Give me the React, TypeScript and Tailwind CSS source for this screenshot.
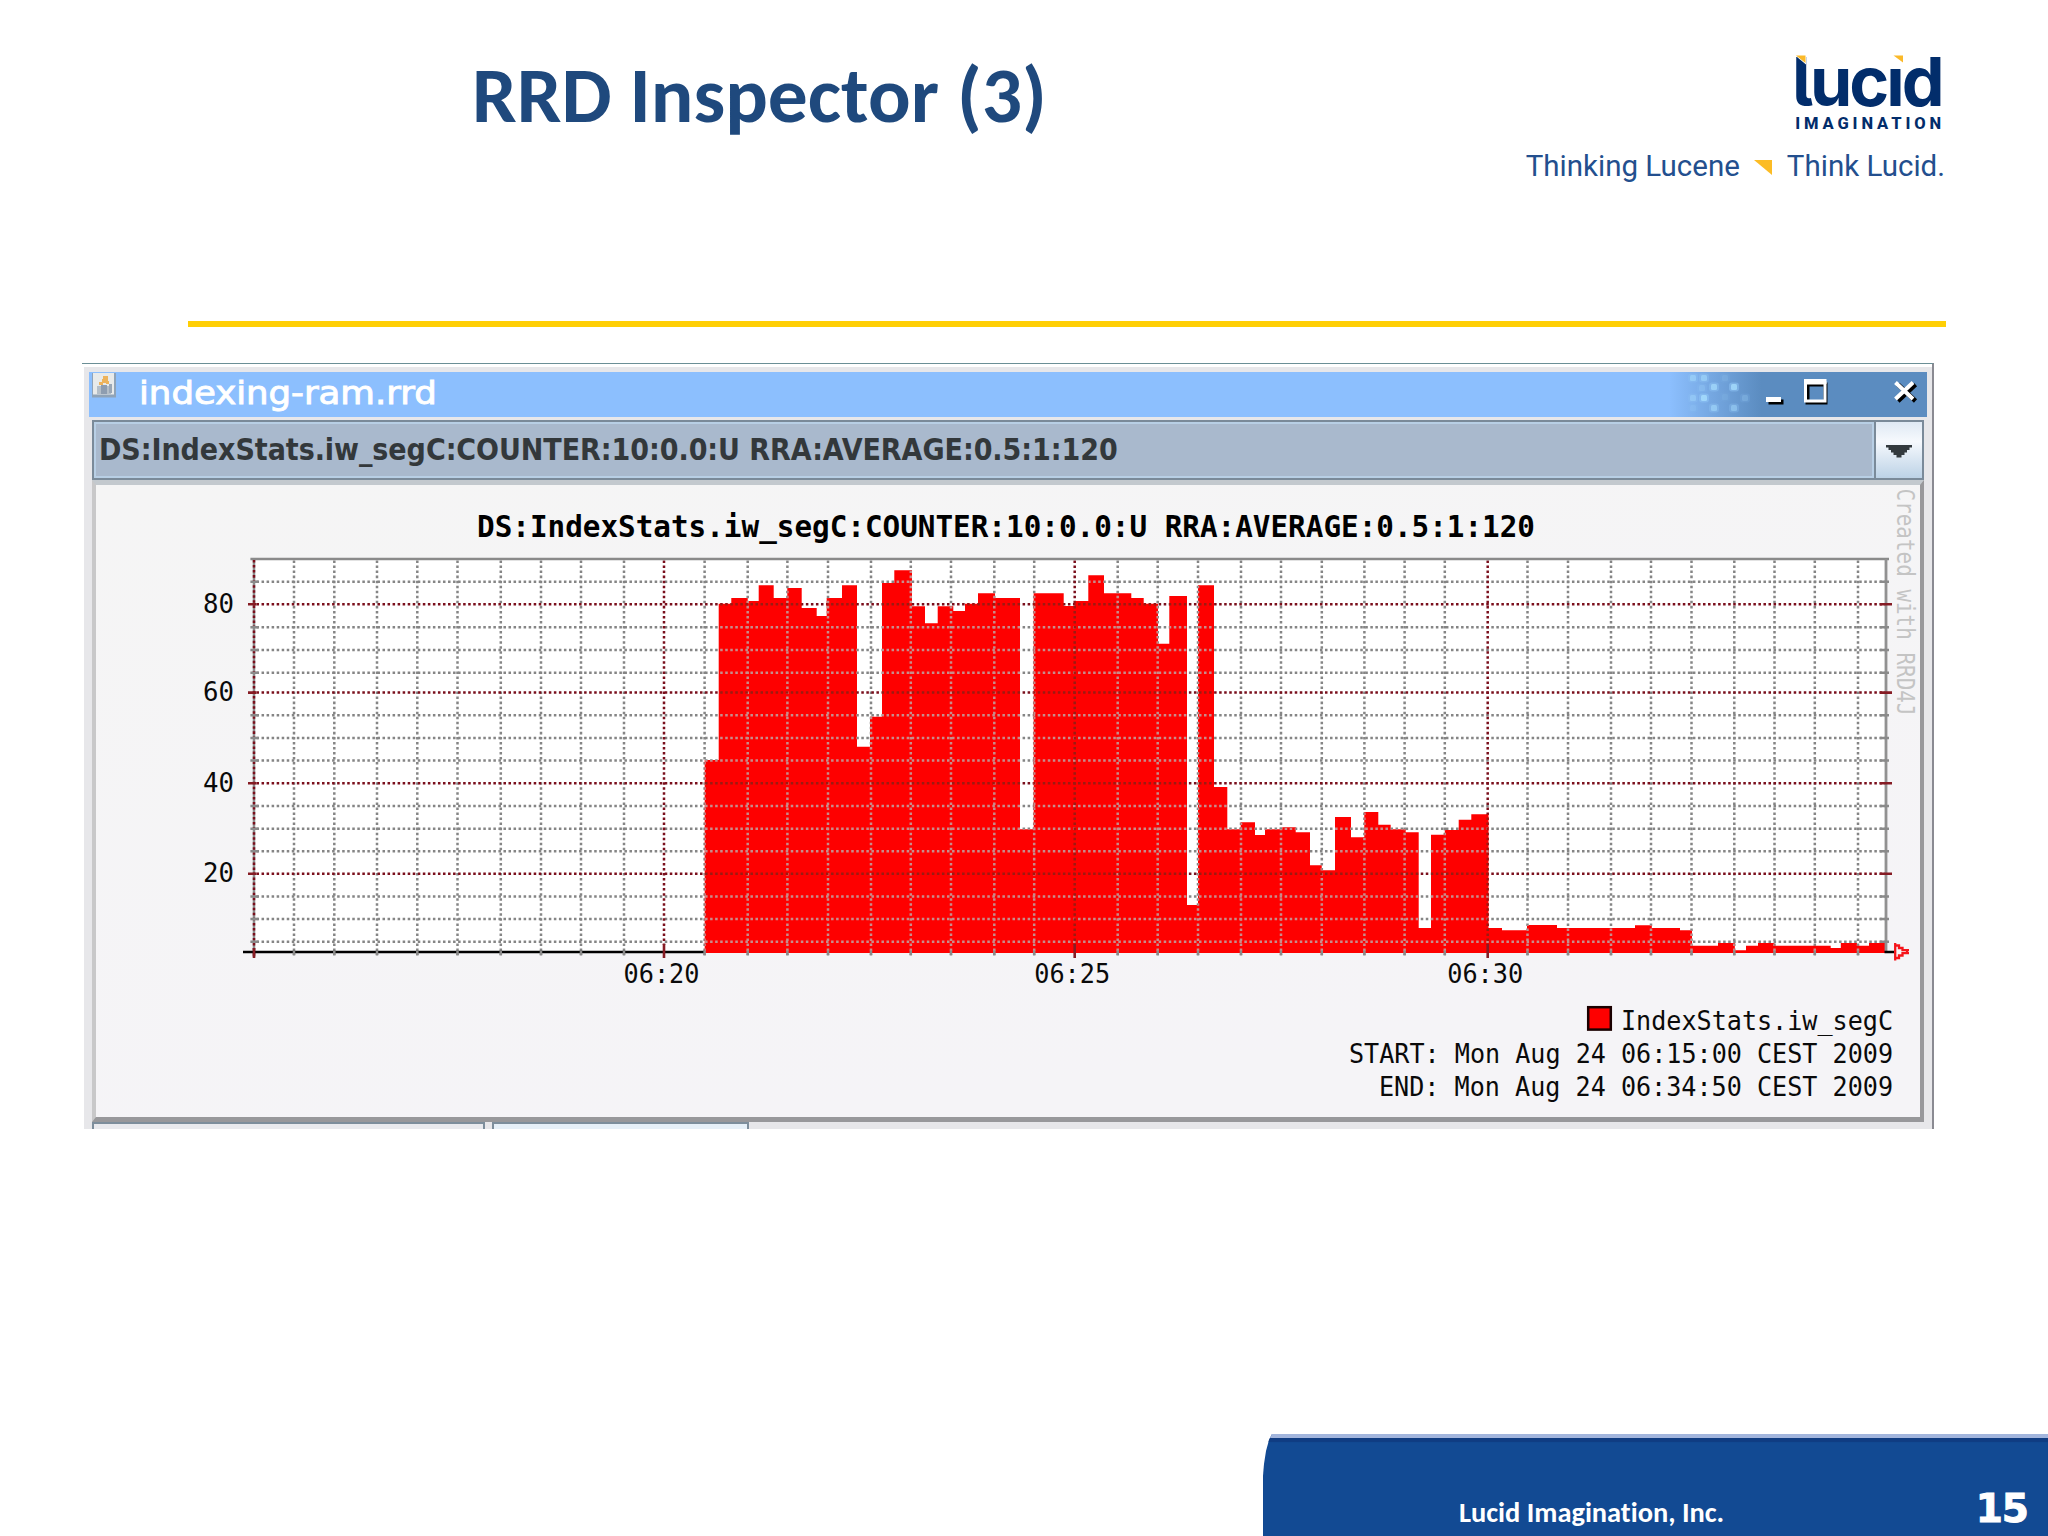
import { Fragment } from "react";

const RRD_DEF = "DS:IndexStats.iw_segC:COUNTER:10:0.0:U RRA:AVERAGE:0.5:1:120";
const MONO = "'DejaVu Sans Mono', monospace";

// plot geometry, in chart units
const LEFT = 254;
const RIGHT = 1886;
const TOP = 559;
const BASE = 953;

// minute marks are spaced unevenly because the graph snaps them to whole pixels
const minorX = [
  294, 334.3, 377, 417.3, 457.5, 500.8, 541, 581, 624, 704.6, 747.7, 787.4, 828, 871, 910.8, 951, 994.3, 1034.2,
  1117.7, 1157.7, 1198, 1241, 1281, 1321.8, 1364.4, 1404.6, 1444.8, 1527.5, 1568, 1611, 1651, 1691.5, 1734.3,
  1774.5, 1814.8, 1858,
];
const majorX = [
  { x: 664, label: "06:20" },
  { x: 1074.7, label: "06:25" },
  { x: 1487.7, label: "06:30" },
];
const minorY = [581.7, 627.3, 650, 672.7, 715.2, 738, 760.4, 806, 828.7, 851.3, 896.4, 919, 941.7];
const majorY = [
  { y: 604.3, label: "80" },
  { y: 692.6, label: "60" },
  { y: 783.3, label: "40" },
  { y: 873.8, label: "20" },
];

// [x where the step starts, top of the step]
const steps = [
  [704.7, 760], [718.7, 603.7], [731.3, 598], [747.7, 601], [758.7, 585.3], [773.7, 598], [787.3, 588],
  [801.7, 608], [816.7, 616], [826.7, 598], [842, 585.3], [857, 746.7], [870, 716.7], [882, 583], [894.3, 570.3],
  [912, 606.3], [925, 623.3], [937.7, 606.3], [953.3, 611], [965, 603.7], [978, 593.3], [995, 598], [1020, 829.3],
  [1033.7, 593.3], [1063.7, 606], [1074.7, 601], [1088.3, 575.3], [1104, 593.3], [1131.3, 598], [1143.7, 603.7],
  [1158, 643.7], [1169.3, 596], [1187, 905], [1198, 585.3], [1214, 787], [1227.3, 829.3], [1240.7, 822.3],
  [1255, 835], [1265, 829.3], [1282.3, 827.3], [1295.7, 832.3], [1310, 865.3], [1321.7, 870.3], [1335, 817],
  [1351, 837.3], [1364.3, 812], [1378.3, 824.7], [1390.7, 829.3], [1405.7, 832.3], [1418.7, 928], [1431, 834.7],
  [1444.8, 830], [1458.7, 819.7], [1471.3, 814.3], [1488.5, 928], [1502, 930.3], [1527, 925], [1557, 928],
  [1635, 925.3], [1651.8, 928], [1680, 930.3], [1692, 945.7], [1718, 943], [1734.8, 950.3], [1746, 945.7],
  [1758, 943], [1774.3, 945.7], [1830.7, 948], [1840.8, 943], [1857, 945.7], [1869, 943],
];
const areaPath =
  `M${steps[0][0]} ${BASE}` + steps.map(([x, y]) => `H${x}V${y}`).join("") + `H1885V${BASE}Z`;

function Grid({ minor, major }: { minor: string; major: string }) {
  return (
    <g strokeWidth="2.5" strokeDasharray="2.52 2.52" fill="none">
      <g stroke={minor}>
        {minorX.map((x) => (
          <path key={x} d={`M${x} 560.5V955`} />
        ))}
        {minorY.map((y) => (
          <path key={y} d={`M256.5 ${y}H1888`} />
        ))}
      </g>
      <g stroke={major}>
        {majorX.map(({ x }) => (
          <path key={x} d={`M${x} 560.5V945`} />
        ))}
        {majorY.map(({ y }) => (
          <path key={y} d={`M256.5 ${y}H1888`} />
        ))}
      </g>
    </g>
  );
}

function Chart() {
  return (
    <svg width="1824" height="632" viewBox="96 485 1824 632" className="block">
      <defs>
        <linearGradient id="panel" x1="0" y1="0" x2="0.4" y2="1">
          <stop offset="0" stopColor="#f5f5f5" />
          <stop offset="1" stopColor="#f5f4f7" />
        </linearGradient>
        <clipPath id="area">
          <path d={areaPath} />
        </clipPath>
      </defs>
      <rect x="96" y="485" width="1824" height="632" fill="url(#panel)" />
      <rect x={LEFT} y={TOP} width={RIGHT - LEFT} height={BASE - TOP} fill="#fff" />

      <Grid minor="#858585" major="#7a0f1c" />
      <path d={areaPath} fill="#fe0000" />
      <g clipPath="url(#area)">
        <Grid minor="#c88c8c" major="#9c1a12" />
      </g>

      {/* frame and axes */}
      <path d="M250.4 559H1889" stroke="#8a8a8a" strokeWidth="2.5" />
      <path d="M1886 559V951" stroke="#919191" strokeWidth="2.8" />
      <path d="M254 560V957" stroke="#8d8d8d" strokeWidth="2.5" />
      <path d="M254 560V957" stroke="#7a0f1c" strokeWidth="2.5" strokeDasharray="2.52 2.52" />
      <path d="M243 952H704.5M1884.5 952H1894" stroke="#000" strokeWidth="2.6" />
      <g stroke="#8a8a8a" strokeWidth="2.5">
        {minorY.map((y) => (
          <path key={y} d={`M250.4 ${y}H258.5M1880 ${y}H1889`} />
        ))}
        {minorX.map((x) => (
          <path key={x} d={`M${x} 950.5V955.5`} />
        ))}
      </g>
      <g stroke="#861c24" strokeWidth="2.6">
        {majorY.map(({ y }) => (
          <path key={y} d={`M248 ${y}H256.5M1880 ${y}H1892`} />
        ))}
        {majorX.map(({ x }) => (
          <path key={x} d={`M${x} 944V958`} />
        ))}
        <path d="M254 948V958" />
      </g>
      <path
        d="M1895.2 943V960.5M1896 945.5H1899V948H1902.5V950.2H1909M1896 958H1899V955.5H1902.5V953.2H1909M1907 949.5V954"
        fill="none"
        stroke="#f5141a"
        strokeWidth="2.3"
      />

      {/* labels */}
      <text x="477" y="537" fontFamily={MONO} fontSize="30" fontWeight="700" textLength="1058" lengthAdjust="spacingAndGlyphs">
        {RRD_DEF}
      </text>
      <g fontFamily={MONO} fontSize="26" fill="#0a0a0a">
        {majorY.map(({ y, label }) => (
          <text key={y} x="203" y={y + 8.3} textLength="31" lengthAdjust="spacingAndGlyphs">
            {label}
          </text>
        ))}
        {majorX.map(({ x, label }) => (
          <text key={x} x={x - 40.5} y="982.5" textLength="76" lengthAdjust="spacingAndGlyphs">
            {label}
          </text>
        ))}
        <rect x="1588.2" y="1007.2" width="22.6" height="22.4" fill="#fe0000" stroke="#1a0000" strokeWidth="2.5" />
        <text x="1621" y="1030" textLength="272" lengthAdjust="spacingAndGlyphs">IndexStats.iw_segC</text>
        <text x="1349" y="1063" textLength="544" lengthAdjust="spacingAndGlyphs">START: Mon Aug 24 06:15:00 CEST 2009</text>
        <text x="1379" y="1095.5" textLength="514" lengthAdjust="spacingAndGlyphs">END: Mon Aug 24 06:34:50 CEST 2009</text>
      </g>
      <text
        transform="translate(1896.5 488.5) rotate(90)"
        fontFamily={MONO}
        fontSize="24"
        fill="#c4c4c4"
        textLength="227"
        lengthAdjust="spacingAndGlyphs"
      >
        Created with RRD4J
      </text>
    </svg>
  );
}

const sparkles = [
  [1693, 378, 0.55], [1704, 378, 0.6], [1725, 378, 0.15], [1702, 388, 0.25], [1714, 387, 0.75], [1734, 387, 0.85],
  [1693, 398, 0.45], [1704, 398, 0.9], [1725, 397, 0.12], [1745, 398, 0.25], [1714, 408, 0.6], [1734, 408, 0.5],
  [1693, 408, 0.15],
];

function WindowButtons() {
  return (
    <svg width="260" height="45" viewBox="1667 372 260 45" className="block">
      {sparkles.map(([x, y, o]) => (
        <Fragment key={`${x}-${y}`}>
          <rect x={x - 5} y={y - 4.5} width="10" height="9" rx="3" fill="#8fc4f5" opacity={o * 0.6} />
          <rect x={x - 3} y={y - 3} width="6" height="6" rx="1.5" fill="#a9e0ff" opacity={o * 0.85} />
        </Fragment>
      ))}
      <path d="M1768.5 399.5h15v5h-15z" fill="#000" />
      <path d="M1766 397h15v5h-15z" fill="#fff" />
      <path d="M1807.5 384.5h18v18h-18z" fill="none" stroke="#000" strokeWidth="4" />
      <path d="M1805.5 383v18h19.5v-18z" fill="none" stroke="#fff" strokeWidth="3" />
      <path d="M1804 379h22.500v5h-22.500z" fill="#fff" />
      <path d="M1898 384.500l17.500 16.500M1915.500 384.500l-17.500 16.500" stroke="#000" strokeWidth="4.500" />
      <path d="M1895.500 382.500l17.500 16.500M1913 382.500l-17.500 16.500" stroke="#fff" strokeWidth="4" />
    </svg>
  );
}

function JavaIcon() {
  return (
    <svg width="24" height="25" viewBox="0 0 24 25" className="mt-px ml-[3px] block shrink-0">
      <rect x="0" y="0" width="24" height="24.500" fill="#8fa3b8" />
      <rect x="1" y="0" width="21" height="21.500" fill="#e8eaea" />
      <path d="M5 13h14v8H5z" fill="#b4bec8" />
      <path d="M9 12h6v9h-6z" fill="#8e9db0" />
      <path d="M17 11h3v9h-3z" fill="#9aa7b6" />
      <path d="M11 3h5v5h1v3h-3v-1h-3v2h-4v-3h3v-3h1z" fill="#edb35c" />
    </svg>
  );
}

function RrdWindow() {
  return (
    <section className="ml-[82px] flex h-[766px] w-[1852px] flex-col border-t border-r-2 border-t-[#6b8f96] border-r-[#8a8a92] pt-[3px] pl-[2px]">
      <div className="flex flex-1 flex-col bg-[#e7e7ea] pt-[5px]">
        <div className="ml-[5px] flex h-[45px] w-[1838px] bg-linear-to-r from-[#8cbffe] from-86% to-[#5b8cc0] to-91%">
          <JavaIcon />
          <span className="ml-[23px] w-[300px] origin-left scale-x-[1.11] whitespace-nowrap font-['DejaVu_Sans'] text-[32px]/[43px] text-white [-webkit-text-stroke:0.9px_white]">
            indexing-ram.rrd
          </span>
          <div className="ml-auto">
            <WindowButtons />
          </div>
        </div>

        <div className="mt-[3px] ml-[8px] flex h-[60px] w-[1832px] border-2 border-[#7a8a99] bg-[#a9b9cd]">
          <div className="flex flex-1 items-center border-2 border-[#b8cfe5] pb-[2px] pl-[3px]">
            <span className="whitespace-nowrap font-['DejaVu_Sans_Condensed','DejaVu_Sans'] text-[30px] font-bold tracking-[-0.06px] text-[#33383b]">
              {RRD_DEF}
            </span>
          </div>
          <div className="flex w-[48px] items-center justify-center border-l-2 border-[#7a8a99] bg-linear-to-b from-[#dfe9f4] via-[#f6f9fd] via-35% to-[#bcd2e6]">
            <svg width="26" height="13" viewBox="0 0 26 13" className="mt-[3px]">
              <path d="M0 0H26V2.500H23.500V5H21V7.500H18.500V10H15.500V12.500H10.500V10H7.500V7.500H5V5H2.500V2.500H0Z" fill="#333a3e" />
            </svg>
          </div>
        </div>

        <div className="ml-[8px] w-[1832px] border-x-4 border-y-[5px] border-t-[#c3c9ce] border-r-[#98989b] border-b-[#98989b] border-l-[#c8c8c9]">
          <Chart />
        </div>
        <div className="ml-[8px] flex flex-1 gap-[7px]">
          <div className="w-[393px] border-x-2 border-t-2 border-[#7d8e9c] bg-[#e9eaee]" />
          <div className="w-[257px] border-x-2 border-t-2 border-[#7d8e9c] bg-[#e6f0f8]" />
        </div>
      </div>
    </section>
  );
}

function Logo() {
  return (
    <div className="flex flex-col items-end text-[#022d6b]">
      <div className="relative h-[62px] w-[150px] font-['Inter']">
        <span className="block pt-px whitespace-nowrap text-[68px]/[62px] font-bold tracking-[-3px] [font-feature-settings:'cv05']">
          lucıd
        </span>
        <svg width="150" height="62" viewBox="0 0 150 62" className="absolute top-0 left-0">
          <path d="M2 5.500h12v10z" fill="#fff" />
          <path d="M4 6.500h9.500v7.500z" fill="#fbb929" />
          <path d="M101.500 6.500h9.500v7z" fill="#fbb929" />
        </svg>
      </div>
      <div className="mt-[3px] mr-[-3px] font-['Roboto'] text-[16.5px]/[20px] font-extrabold tracking-[3.900px]">
        IMAGINATION
      </div>
      <div className="mt-[14px] mr-[-3px] flex items-center whitespace-nowrap font-['Roboto'] text-[29.5px]/[36px] text-[#234f8e]">
        <span>Thinking Lucene</span>
        <svg width="18" height="15" viewBox="0 0 18 15" className="mt-[3px] mr-[15px] ml-[14px]">
          <path d="M0 0H18V15Z" fill="#fcbc25" />
        </svg>
        <span>Think Lucid.</span>
      </div>
    </div>
  );
}

export default function App() {
  return (
    <main className="flex h-[1536px] w-[2048px] flex-col overflow-hidden bg-white">
      <header className="flex h-[321px] items-start justify-between pt-[49px] pr-[106px] pl-[472px]">
        <h1 className="whitespace-nowrap font-['Carlito','Lato'] text-[79.5px]/[92px] font-bold text-[#1f497d]">
          RRD Inspector (3)
        </h1>
        <Logo />
      </header>
      <div className="ml-[188px] h-[6px] w-[1758px] shrink-0 bg-[#ffcf05]" />
      <div className="mt-[36px]">
        <RrdWindow />
      </div>
      <footer className="mt-auto ml-[1263px] flex h-[102px] items-end justify-between border-t-[4px] border-[#a2b5dd] bg-[#124a93] pr-[20px] pl-[196px] text-white shadow-[inset_0_4px_1px_#103c82] [clip-path:polygon(9px_0,100%_0,100%_100%,0_100%,0_42px,1px_30px,3px_17px,6px_6px)]">
        <span className="mb-[5px] whitespace-nowrap font-['Carlito','Lato'] text-[28.4px]/[36px] font-bold [font-variant-ligatures:none]">
          Lucid Imagination, Inc.
        </span>
        <span className="mb-[5px] font-['DejaVu_Sans'] text-[39px]/[44px] font-bold tracking-[-1px] [-webkit-text-stroke:1px_white]">15</span>
      </footer>
    </main>
  );
}
